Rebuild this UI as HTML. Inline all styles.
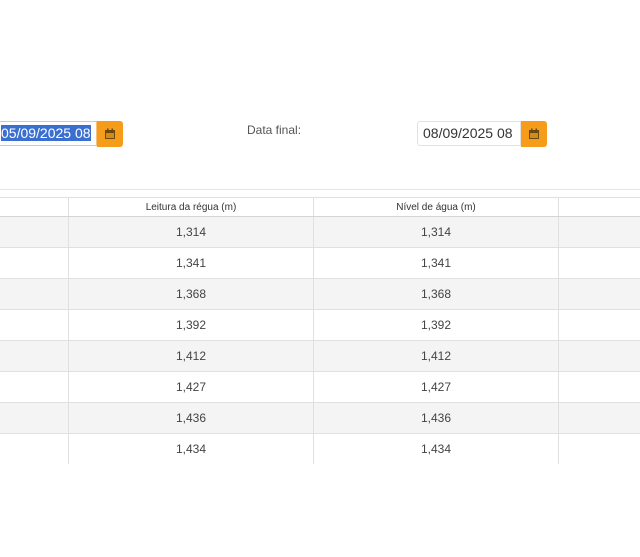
<!DOCTYPE html>
<html><head><style>
body{margin:0;width:640px;height:557px;background:#fff;font-family:"Liberation Sans",sans-serif;color:#444;position:relative;overflow:hidden}
.a{position:absolute}
.inp{border:1px solid #e2e2e2;border-radius:3px 0 0 3px;height:25px;box-sizing:border-box;font-size:14px;line-height:23px;padding-left:5px;color:#333;background:#fff}
.btn{background:#f59c1a;border-radius:0 3px 3px 0;width:26px;height:26px;display:flex;align-items:center;justify-content:center}
table{position:absolute;left:-177px;top:197px;border-collapse:collapse;font-size:12px;table-layout:fixed;width:977px}
td,th{border:1px solid #e0e0e0;text-align:center;height:30px;padding:0}
th{height:18px;font-weight:normal;font-size:10px;color:#333;border-bottom:1px solid #d4d4d4}
tr:nth-child(even) td{background:#f4f4f4}
</style></head><body>
<div class="a inp" style="left:-5px;top:121px;width:102px;border-color:#f5c27a"><span style="background:#3a6fd0;color:#fff">05/09/2025 08</span></div>
<div class="a btn" style="left:97px;top:121px"><svg width="12" height="12" viewBox="0 0 12 12"><rect x="1" y="2" width="10" height="9" fill="#6b4a10"/><rect x="2" y="5" width="8" height="5" fill="#d4891a"/><rect x="3" y="0.5" width="1.5" height="3" fill="#6b4a10"/><rect x="7.5" y="0.5" width="1.5" height="3" fill="#6b4a10"/></svg></div>
<div class="a" style="left:247px;top:123px;font-size:12px;color:#555">Data final:</div>
<div class="a inp" style="left:417px;top:121px;width:104px">08/09/2025 08</div>
<div class="a btn" style="left:521px;top:121px"><svg width="12" height="12" viewBox="0 0 12 12"><rect x="1" y="2" width="10" height="9" fill="#6b4a10"/><rect x="2" y="5" width="8" height="5" fill="#d4891a"/><rect x="3" y="0.5" width="1.5" height="3" fill="#6b4a10"/><rect x="7.5" y="0.5" width="1.5" height="3" fill="#6b4a10"/></svg></div>
<div class="a" style="left:0;top:189px;width:640px;height:1px;background:#e6e6e6"></div>
<table>
<colgroup><col style="width:245px"><col style="width:245px"><col style="width:245px"><col style="width:242px"></colgroup>
<tr><th></th><th>Leitura da régua (m)</th><th>Nível de água (m)</th><th></th></tr>
<tr><td></td><td>1,314</td><td>1,314</td><td></td></tr>
<tr><td></td><td>1,341</td><td>1,341</td><td></td></tr>
<tr><td></td><td>1,368</td><td>1,368</td><td></td></tr>
<tr><td></td><td>1,392</td><td>1,392</td><td></td></tr>
<tr><td></td><td>1,412</td><td>1,412</td><td></td></tr>
<tr><td></td><td>1,427</td><td>1,427</td><td></td></tr>
<tr><td></td><td>1,436</td><td>1,436</td><td></td></tr>
<tr><td style="border-bottom:none"></td><td style="border-bottom:none">1,434</td><td style="border-bottom:none">1,434</td><td style="border-bottom:none"></td></tr>
</table>
</body></html>
